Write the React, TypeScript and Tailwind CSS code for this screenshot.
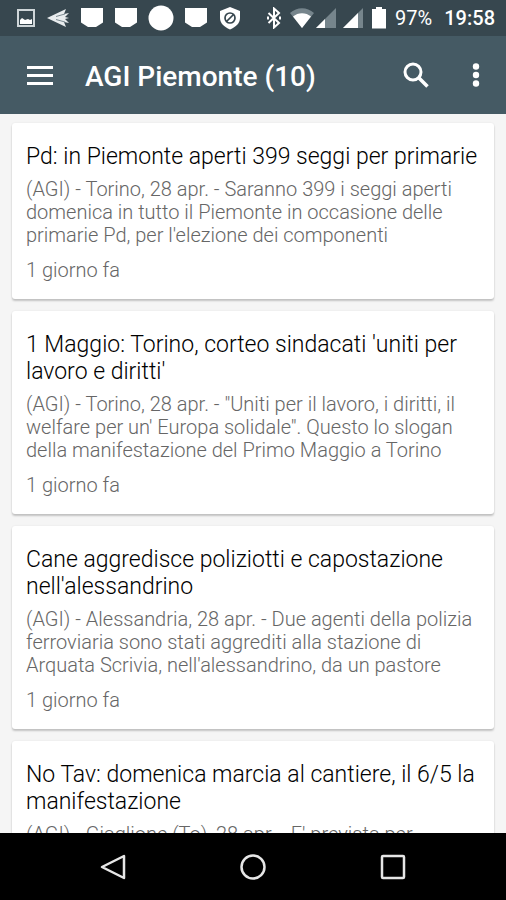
import type { ReactNode } from "react";

type Article = {
  title: string;
  excerpt: string;
  date?: string;
};

const articles: Article[] = [
  {
    title: "Pd: in Piemonte aperti 399 seggi per primarie",
    excerpt:
      "(AGI) - Torino, 28 apr. - Saranno 399 i seggi aperti domenica in tutto il Piemonte in occasione delle primarie Pd, per l'elezione dei componenti",
    date: "1 giorno fa",
  },
  {
    title: "1 Maggio: Torino, corteo sindacati 'uniti per lavoro e diritti'",
    excerpt:
      "(AGI) - Torino, 28 apr. - \"Uniti per il lavoro, i diritti, il welfare per un' Europa solidale\". Questo lo slogan della manifestazione del Primo Maggio a Torino",
    date: "1 giorno fa",
  },
  {
    title: "Cane aggredisce poliziotti e capostazione nell'alessandrino",
    excerpt:
      "(AGI) - Alessandria, 28 apr. - Due agenti della polizia ferroviaria sono stati aggrediti alla stazione di Arquata Scrivia, nell'alessandrino, da un pastore",
    date: "1 giorno fa",
  },
  {
    title: "No Tav: domenica marcia al cantiere, il 6/5 la manifestazione",
    excerpt: "(AGI) - Giaglione (To), 28 apr. - E' prevista per",
  },
];

const PocketIcon = () => (
  <svg className="h-5 w-6" viewBox="0 0 24 20" fill="#fff">
    <path d="M1 0h22v14.500l-7 4.500H8l-7-4.500z" />
  </svg>
);

const SignalIcon = ({ level }: { level: number }) => (
  <svg className="h-5 w-5" viewBox="0 0 20 20">
    <path d="M20 0v20H0z" fill="#76858c" />
    <path d={`M${level} ${20 - level}V20H0z`} fill="#fff" />
  </svg>
);

const StatusBar = () => (
  <div className="flex h-9 shrink-0 items-center justify-between bg-[#37474f] pr-[11px] pl-4 text-white">
    <div className="flex items-center gap-[10px]">
      <svg className="h-5 w-5" viewBox="0 0 20 20">
        <path d="M2 2h16v16H2z" fill="none" stroke="#cfd6d9" strokeWidth="2" />
        <path d="M4 16v-4l2-2 3 2 3-1 2 1 2-1v5z" fill="#fff" />
      </svg>
      <svg className="h-5 w-6" viewBox="0 0 24 20">
        <path d="M1 10L20 1l-2 5 5-1-4 4 4 1-4 1 4 4-5-1 2 5z" fill="#e8ecee" />
        <path d="M10 8.500L19 6M10 11.500l9 2.500" stroke="#7c8a91" strokeWidth="1" />
      </svg>
      <PocketIcon />
      <PocketIcon />
      <svg className="h-[26px] w-[26px]" viewBox="0 0 26 26">
        <circle cx="13" cy="13" r="12.500" fill="#fff" />
      </svg>
      <PocketIcon />
      <svg className="h-6 w-6" viewBox="0 0 24 24">
        <path d="M12 1l10 4v7c0 5-4 9-10 11.500C6 21 2 17 2 12V5z" fill="#fff" />
        <circle cx="12" cy="12" r="5" fill="none" stroke="#37474f" strokeWidth="1.700" />
        <path d="M8.500 15.500l7-7" stroke="#37474f" strokeWidth="1.700" />
      </svg>
    </div>
    <div className="flex items-center">
      <svg className="mr-2 h-[22px] w-4" viewBox="0 0 16 22">
        <path
          d="M2.500 6l10.500 10L8 20.500v-19L13 6 2.500 16"
          fill="none"
          stroke="#fff"
          strokeWidth="2"
        />
        <path d="M1 9.500h2v3H1zM13 9.500h2v3h-2z" fill="#fff" />
      </svg>
      <svg className="mr-[2px] h-5 w-6" viewBox="0 0 24 20">
        <path d="M0 5C7-1.500 17-1.500 24 5L12 20z" fill="#76858c" />
        <path d="M3 8.500c5-4.500 13-4.500 18 0L12 20z" fill="#fff" />
      </svg>
      <div className="mr-2 flex gap-[7px]">
        <SignalIcon level={9} />
        <SignalIcon level={15} />
      </div>
      <svg className="mr-2 h-[22px] w-4" viewBox="0 0 16 22">
        <path d="M5 0h6v2h4v19.500H1V2h4z" fill="#fff" />
      </svg>
      <span className="mr-3 text-[20px] leading-6">97%</span>
      <span className="text-[20px] leading-6 font-medium">19:58</span>
    </div>
  </div>
);

const AppBar = () => (
  <header className="flex h-[78px] shrink-0 items-center bg-[#455a64] px-[26px] text-white">
    <button type="button" aria-label="Menu" className="mr-[31px]">
      <svg className="block h-7 w-7" viewBox="0 0 28 28">
        <path d="M1 6.500h26M1 14.500h26M1 22.500h26" stroke="#fff" strokeWidth="3" />
      </svg>
    </button>
    <h1 className="flex-1 pt-1 text-[28px] leading-8 font-medium">AGI Piemonte (10)</h1>
    <button type="button" aria-label="Cerca" className="mr-[42px]">
      <svg className="block h-7 w-7" viewBox="0 0 28 28" fill="none" stroke="#fff">
        <circle cx="11" cy="11" r="8" strokeWidth="3" />
        <path d="M16.500 16.500l9 9" strokeWidth="3.500" />
      </svg>
    </button>
    <button type="button" aria-label="Altre opzioni">
      <svg className="block h-7 w-2" viewBox="0 0 8 28" fill="#fff">
        <circle cx="4" cy="5.500" r="3.200" />
        <circle cx="4" cy="14" r="3.200" />
        <circle cx="4" cy="22.500" r="3.200" />
      </svg>
    </button>
  </header>
);

const ArticleCard = ({ title, excerpt, date }: Article) => (
  <article className="shrink-0 rounded-[3px] bg-white pt-5 pr-[10px] pb-[17px] pl-[14px] shadow-[0_2px_2px_rgba(0,0,0,0.2),0_0_2px_rgba(0,0,0,0.08)]">
    <h2 className="text-[23px] leading-[27px] font-light text-[#000]">{title}</h2>
    <p className="mt-2 line-clamp-3 text-[20px] leading-[23px] font-light text-[#666]">{excerpt}</p>
    {date && <p className="mt-3 text-[20px] leading-[23px] font-light text-[#666]">{date}</p>}
  </article>
);

const NavButton = ({ label, children }: { label: string; children: ReactNode }) => (
  <button type="button" aria-label={label}>
    <svg
      className="block h-7 w-7"
      viewBox="0 0 28 28"
      fill="none"
      stroke="#e6e6e6"
      strokeWidth="2.500"
      strokeLinejoin="round"
    >
      {children}
    </svg>
  </button>
);

const NavigationBar = () => (
  <nav className="flex h-[67px] shrink-0 items-center justify-center gap-28 bg-black">
    <NavButton label="Indietro">
      <path d="M25 3v22L3 14z" />
    </NavButton>
    <NavButton label="Home">
      <circle cx="14" cy="14" r="11.500" />
    </NavButton>
    <NavButton label="Recenti">
      <rect x="3" y="3" width="22" height="22" rx="1" />
    </NavButton>
  </nav>
);

export default function App() {
  return (
    <div className="flex h-screen flex-col bg-[#f5f5f5] font-[Roboto,sans-serif]">
      <StatusBar />
      <AppBar />
      <main className="flex min-h-0 flex-1 flex-col gap-3 overflow-hidden px-3 pt-[9px]">
        {articles.map((article) => (
          <ArticleCard key={article.title} {...article} />
        ))}
      </main>
      <NavigationBar />
    </div>
  );
}
